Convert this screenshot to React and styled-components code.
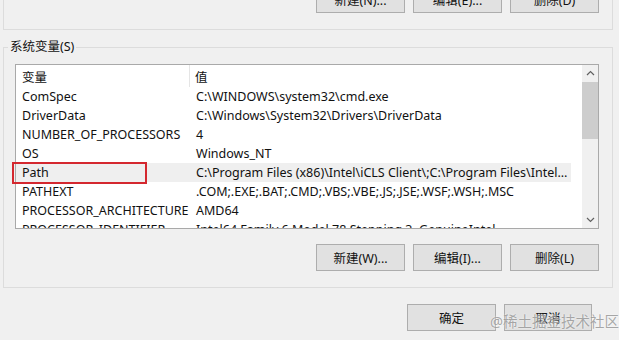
import React from 'react';
import styled, { createGlobalStyle } from 'styled-components';

const rows = [
  { name: 'ComSpec', value: 'C:\\WINDOWS\\system32\\cmd.exe' },
  { name: 'DriverData', value: 'C:\\Windows\\System32\\Drivers\\DriverData' },
  { name: 'NUMBER_OF_PROCESSORS', value: '4' },
  { name: 'OS', value: 'Windows_NT' },
  { name: 'Path', value: 'C:\\Program Files (x86)\\Intel\\iCLS Client\\;C:\\Program Files\\Intel\\iCLS Client\\;C:\\WINDOWS\\system32', selected: true },
  { name: 'PATHEXT', value: '.COM;.EXE;.BAT;.CMD;.VBS;.VBE;.JS;.JSE;.WSF;.WSH;.MSC' },
  { name: 'PROCESSOR_ARCHITECTURE', value: 'AMD64' },
  { name: 'PROCESSOR_IDENTIFIER', value: 'Intel64 Family 6 Model 78 Stepping 3, GenuineIntel' },
];

const Chevron = ({ down }) => (
  <svg width="9" height="6" viewBox="0 0 9 6">
    <path
      d={down ? 'M1 1 L4.5 4.5 L8 1' : 'M1 5 L4.5 1.5 L8 5'}
      fill="none"
      stroke="#606060"
      strokeWidth="1.2"
    />
  </svg>
);

const App = () => {
  return (
    <>
      <GlobalStyle />
      <Page>
        <TopGroup>
          <ButtonRow>
            <Button>新建(N)...</Button>
            <Button>编辑(E)...</Button>
            <Button>删除(D)</Button>
          </ButtonRow>
        </TopGroup>

        <Group>
          <Legend>系统变量(S)</Legend>
          <List>
            <ListBody>
              <Header>
                <HeadCell $first>变量</HeadCell>
                <HeadCell>值</HeadCell>
              </Header>
              {rows.map((r) => (
                <Row key={r.name} $selected={r.selected}>
                  <Cell $first>{r.name}</Cell>
                  <Cell>{r.value}</Cell>
                </Row>
              ))}
            </ListBody>
            <ScrollBar>
              <ArrowBox><Chevron /></ArrowBox>
              <Track>
                <Thumb />
              </Track>
              <ArrowBox><Chevron down /></ArrowBox>
            </ScrollBar>
          </List>
          <ButtonRow $bottom>
            <Button>新建(W)...</Button>
            <Button>编辑(I)...</Button>
            <Button>删除(L)</Button>
          </ButtonRow>
        </Group>

        <DialogButtons>
          <Button>确定</Button>
          <Button $narrow>取消</Button>
        </DialogButtons>

        <Highlight />
        <Watermark>@稀土掘金技术社区</Watermark>
      </Page>
    </>
  );
};

export default App;

// styled components

const GlobalStyle = createGlobalStyle`
  html, body {
    margin: 0;
    padding: 0;
    background: #f0f0f0;
    overflow: hidden;
  }
  body {
    font-family: "Noto Sans", "Noto Sans CJK SC", sans-serif;
    font-size: 12.5px;
    color: #111;
  }
`;

const Page = styled.div`
  position: relative;
  width: 619px;
  height: 340px;
  overflow: hidden;
  background: #f0f0f0;
`;

const TopGroup = styled.div`
  box-sizing: border-box;
  width: 610px;
  height: 60px;
  margin: -30px 0 0 3px;
  padding: 15px 13px 0 0;
  border: 1px solid #dcdcdc;
`;

const ButtonRow = styled.div`
  display: flex;
  justify-content: flex-end;
  gap: 8px;
  margin-top: ${(p) => (p.$bottom ? '15px' : '0')};
  padding-right: ${(p) => (p.$bottom ? '2px' : '0')};
`;

const Button = styled.div`
  box-sizing: border-box;
  width: ${(p) => (p.$narrow ? '88px' : '89px')};
  height: 27px;
  display: flex;
  align-items: center;
  justify-content: center;
  background: #e1e1e1;
  border: 1px solid #adadad;
  font-size: 12.5px;
  color: #111;
`;

const Group = styled.fieldset`
  box-sizing: border-box;
  width: 610px;
  height: 249px;
  margin: 9px 0 0 3px;
  padding: 9px 11px 15px 11px;
  border: 1px solid #dcdcdc;
  min-width: 0;
`;

const Legend = styled.legend`
  margin-left: -7px;
  padding: 0 2px;
  font-size: 12.5px;
  line-height: 16px;
  color: #111;
`;

const List = styled.div`
  box-sizing: border-box;
  width: 584px;
  height: 165px;
  display: flex;
  background: #fff;
  border: 1px solid #a9a9a9;
  overflow: hidden;
`;

const ListBody = styled.div`
  flex: 1;
  display: flex;
  flex-direction: column;
  overflow: hidden;
`;

const Header = styled.div`
  display: grid;
  grid-template-columns: 174px minmax(0, 1fr);
  height: 22px;
  flex-shrink: 0;
  width: 555px;
`;

const HeadCell = styled.div`
  display: flex;
  align-items: center;
  padding-left: ${(p) => (p.$first ? '6px' : '5px')};
  border-right: ${(p) => (p.$first ? '1px solid #e5e5e5' : 'none')};
`;

const Row = styled.div`
  display: grid;
  grid-template-columns: 175px minmax(0, 1fr);
  height: 19px;
  line-height: 19px;
  flex-shrink: 0;
  width: 555px;
  background: ${(p) => (p.$selected ? '#efefef' : 'transparent')};
`;

const Cell = styled.div`
  padding-left: ${(p) => (p.$first ? '6px' : '5px')};
  white-space: nowrap;
  overflow: hidden;
  text-overflow: ellipsis;
  min-width: 0;
`;

const ScrollBar = styled.div`
  width: 16px;
  flex-shrink: 0;
  display: flex;
  flex-direction: column;
  background: #f0f0f0;
`;

const ArrowBox = styled.div`
  height: 16px;
  display: flex;
  align-items: center;
  justify-content: center;
  flex-shrink: 0;
`;

const Track = styled.div`
  flex: 1;
  padding-top: 1px;
`;

const Thumb = styled.div`
  height: 57px;
  background: #cdcdcd;
`;

const DialogButtons = styled.div`
  display: flex;
  justify-content: flex-end;
  gap: 8px;
  margin-top: 16px;
  padding-right: 27px;
`;

const Highlight = styled.div`
  position: absolute;
  left: 12px;
  top: 162px;
  width: 131px;
  height: 18px;
  border: 2px solid #d4282f;
`;

const Watermark = styled.div`
  position: absolute;
  left: 490px;
  top: 311px;
  font-size: 14.5px;
  line-height: 20px;
  white-space: nowrap;
  color: rgba(140, 140, 140, 0.75);
  text-shadow: 0 0 2px rgba(255, 255, 255, 0.9);
`;
